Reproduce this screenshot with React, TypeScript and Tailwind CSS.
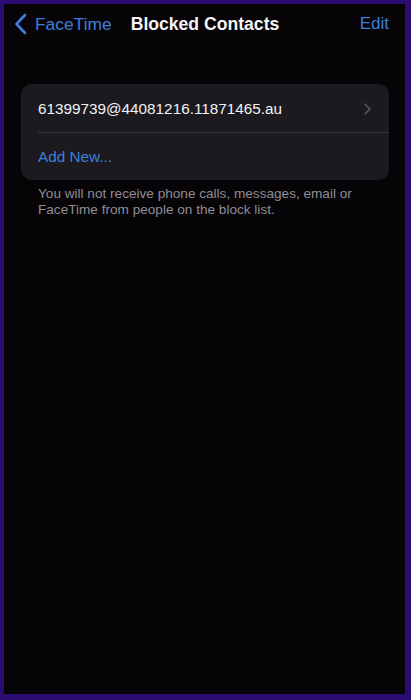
import React from "react";

export default function App() {
  return (
    <div
      className="w-[411px] h-[700px] bg-[#2a0c72] pl-[4px] pr-[6px] pt-[4px] pb-[6px]"
      style={{ fontFamily: '"Liberation Sans", Arial, sans-serif' }}
    >
      <div className="w-full h-full bg-[#070408] flex flex-col">
        <div className="h-[40px] flex items-center relative">
          <div className="flex items-center pl-[10px] text-[#3d7fd8] text-[17.4px]">
            <svg width="14" height="22" viewBox="0 0 14 22" className="mr-[7px]">
              <path d="M11 2 L2.5 11 L11 20" fill="none" stroke="#3d7fd8" strokeWidth="2.6" strokeLinecap="round" strokeLinejoin="round" />
            </svg>
            <span>FaceTime</span>
          </div>
          <div className="ml-[19px] text-[17.6px] font-bold text-[#f4f4f6]">Blocked Contacts</div>
          <div className="ml-auto mr-[16px] text-[17px] text-[#3d7fd8]">Edit</div>
        </div>
        <div className="mt-[40px] mx-[17px] mr-[16px] rounded-[11px] bg-[#1c1a1f] overflow-hidden">
          <div className="h-[48px] flex items-center pt-[2px] pl-[17px] pr-[18px] text-[15.3px] text-[#f2f2f4]">
            <span>61399739@44081216.11871465.au</span>
            <svg width="7" height="12" viewBox="0 0 7 12" className="ml-auto">
              <path d="M1.2 1.2 L5.8 6 L1.2 10.8" fill="none" stroke="#5b5a60" strokeWidth="1.6" strokeLinecap="round" strokeLinejoin="round" />
            </svg>
          </div>
          <div className="ml-[17px] h-px bg-[#39373c]" />
          <div className="h-[47px] flex items-center pt-[2px] pl-[17px] text-[15.3px] text-[#3d7fd8]">Add New...</div>
        </div>
        <div className="ml-[34px] mt-[6px] text-[13.6px] leading-[16px] text-[#8e8d93] whitespace-nowrap">
          You will not receive phone calls, messages, email or
          <br />
          FaceTime from people on the block list.
        </div>
      </div>
    </div>
  );
}
